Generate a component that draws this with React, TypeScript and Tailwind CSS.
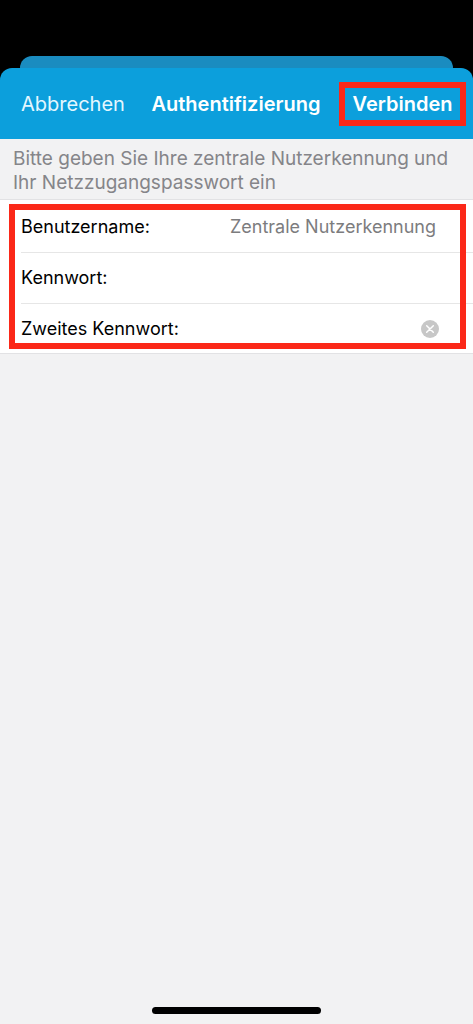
import { useState } from "react";

type Field = {
  id: string;
  label: string;
  type: "text" | "password";
  placeholder?: string;
  clearable?: boolean;
};

const FIELDS: Field[] = [
  { id: "username", label: "Benutzername:", type: "text", placeholder: "Zentrale Nutzerkennung" },
  { id: "password", label: "Kennwort:", type: "password" },
  { id: "second-password", label: "Zweites Kennwort:", type: "password", clearable: true },
];

function ClearIcon() {
  return (
    <svg viewBox="0 0 18 18" className="size-[18px]" aria-hidden="true">
      <circle cx="9" cy="9" r="9" fill="#c7c7c7" />
      <path d="M5.7 5.7l6.6 6.6M12.3 5.7l-6.6 6.6" stroke="#fff" strokeWidth="1.5" strokeLinecap="round" />
    </svg>
  );
}

function NavBar() {
  return (
    <header className="flex h-[71px] items-center rounded-t-xl bg-[#0c9fdc] pr-[7px] pl-[21px] text-xl text-white">
      <button type="button" className="text-[#e4f7ff]">
        Abbrechen
      </button>
      <h1 className="flex-1 pl-2 text-center font-semibold">Authentifizierung</h1>
      <button
        type="submit"
        form="login"
        className="h-11 w-[127px] border-6 border-[#fb2818] text-center font-semibold whitespace-nowrap"
      >
        Verbinden
      </button>
    </header>
  );
}

// The red outline lies over the rows, so the separators run on behind it.
function LoginForm() {
  const [values, setValues] = useState<Record<string, string>>({});
  const update = (id: string, value: string) => setValues((prev) => ({ ...prev, [id]: value }));

  return (
    <form
      id="login"
      onSubmit={(e) => e.preventDefault()}
      className="relative border-y border-[#e2e2e4] bg-white pl-[21px]"
    >
      <div className="divide-y divide-[#e6e6e6] pt-0.5">
        {FIELDS.map((field) => (
          <div key={field.id} className="flex h-[51px] items-center pr-[34px] text-lg last:h-[49px]">
            <label htmlFor={field.id} className="text-black">
              {field.label}
            </label>
            <input
              id={field.id}
              type={field.type}
              placeholder={field.placeholder}
              value={values[field.id] ?? ""}
              onChange={(e) => update(field.id, e.target.value)}
              className="min-w-0 flex-1 pr-[3px] text-right text-black outline-none placeholder:text-[#7c7c7e]"
            />
            {field.clearable && (
              <button type="button" aria-label="Eingabe löschen" onClick={() => update(field.id, "")}>
                <ClearIcon />
              </button>
            )}
          </div>
        ))}
      </div>
      <div className="pointer-events-none absolute top-1 right-[7px] bottom-1 left-[9px] border-6 border-[#fb2818]" />
    </form>
  );
}

export default function App() {
  return (
    <div className="flex min-h-screen flex-col bg-black pt-14 font-['Inter','Liberation_Sans',sans-serif]">
      {/* edge of the sheet underneath */}
      <div className="mx-5 -mb-3 h-6 rounded-t-xl bg-[#1a8cc0]" />
      <NavBar />
      <main className="flex flex-1 flex-col bg-[#f2f2f3]">
        <p className="px-[13px] pt-2 pb-1 text-[19px] leading-6 text-[#858589]">
          Bitte geben Sie Ihre zentrale Nutzerkennung und Ihr Netzzugangspasswort ein
        </p>
        <LoginForm />
        <div className="mx-auto mt-auto mb-[10px] h-[7px] w-[169px] rounded-full bg-black" />
      </main>
    </div>
  );
}
